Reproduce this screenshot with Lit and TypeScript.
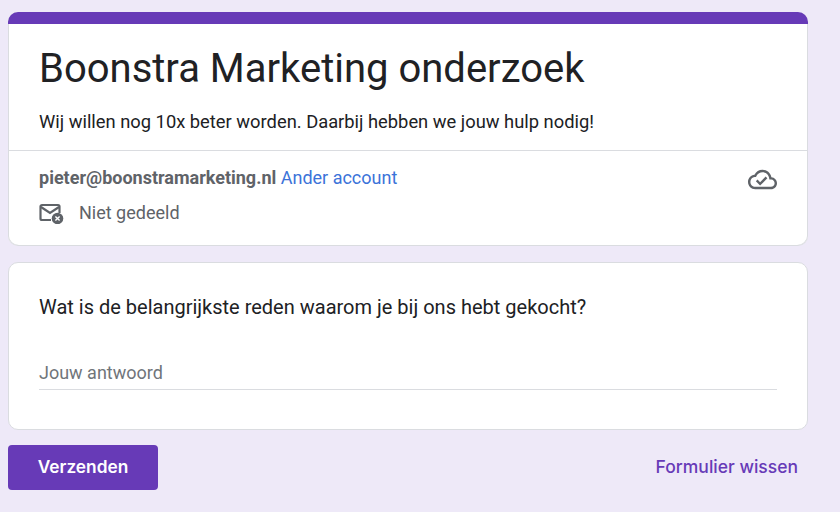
import { LitElement, html, css, svg } from 'lit';
import { customElement } from 'lit/decorators.js';

const cloudIcon = svg`<path fill="#5f6368" d="M19.35 10.04C18.67 6.59 15.64 4 12 4 9.11 4 6.6 5.64 5.35 8.04 2.34 8.36 0 10.91 0 14c0 3.31 2.69 6 6 6h13c2.76 0 5-2.24 5-5 0-2.64-2.05-4.78-4.65-4.96zM19 18H6c-2.21 0-4-1.79-4-4 0-2.05 1.53-3.76 3.56-3.97l1.07-.11.5-.95C8.08 7.14 9.94 6 12 6c2.62 0 4.88 1.86 5.39 4.43l.3 1.5 1.53.11c1.56.1 2.78 1.41 2.78 2.96 0 1.65-1.35 3-3 3zm-9-3.82l-2.09-2.09L6.5 13.5 10 17l6.01-6.01-1.41-1.41z"/>`;

const mailIcon = svg`<path d="M20.5 11 V4.5 a1.5 1.5 0 0 0 -1.5 -1.5 H3 A1.5 1.5 0 0 0 1.5 4.5 V16.5 a1.5 1.5 0 0 0 1.5 1.5 H12" fill="none" stroke="#5f6368" stroke-width="2.2"/>
  <path d="M2 5 L11 11 L20 5" fill="none" stroke="#5f6368" stroke-width="2.2"/>
  <circle cx="18.5" cy="16.5" r="5.8" fill="#5f6368"/>
  <path d="M16.4 14.4 L20.6 18.6 M20.6 14.4 L16.4 18.6" stroke="#fff" stroke-width="1.4"/>`;

@customElement('app-root')
export class AppRoot extends LitElement {
  static styles = css`
    :host {
      display: block;
      width: 840px;
      height: 512px;
      overflow: hidden;
      background: #eee9f8;
      font-family: Roboto, sans-serif;
      color: #202124;
    }
    .page {
      width: 800px;
      margin-left: 8px;
      padding-top: 12px;
      display: flex;
      flex-direction: column;
      gap: 16px;
    }
    .card {
      background: #fff;
      border: 1px solid #dadce0;
      border-radius: 10px;
      box-sizing: border-box;
    }
    .header {
      height: 234px;
      border: 0;
      border-bottom: 1px solid #dadce0;
      overflow: hidden;
      display: flex;
      flex-direction: column;
      box-shadow: inset 1px 0 0 #dadce0, inset -1px 0 0 #dadce0;
    }
    .band {
      height: 12px;
      flex: none;
      background: #673ab7;
    }
    .intro {
      height: 127px;
      flex: none;
      box-sizing: border-box;
      padding: 0 31px;
      border-bottom: 1px solid #dadce0;
    }
    h1 {
      margin: 0;
      padding-top: 21px;
      font-size: 40px;
      line-height: 48px;
      font-weight: 400;
    }
    .desc {
      margin: 17px 0 0;
      font-size: 18.33px;
      line-height: 24px;
    }
    .account {
      display: flex;
      justify-content: space-between;
      padding: 15px 31px 0;
    }
    .who {
      font-size: 18px;
      line-height: 24px;
    }
    .who b {
      font-weight: 700;
      color: #5f6368;
    }
    .who span {
      color: #3b73d9;
    }
    .cloud {
      display: block;
      width: 29px;
      height: 29px;
      margin-top: -1px;
    }
    .shared {
      display: flex;
      align-items: center;
      gap: 15px;
      padding: 7px 31px 0;
      font-size: 18px;
      line-height: 24px;
      color: #5f6368;
    }
    .shared svg {
      display: block;
      width: 25px;
      height: 22px;
    }
    .question {
      height: 168px;
      padding: 30px 30px 0;
    }
    .label {
      font-size: 20px;
      line-height: 28px;
    }
    .answer {
      margin-top: 37px;
      height: 31px;
      font-size: 18px;
      line-height: 30px;
      color: #70757a;
      border-bottom: 1px solid #dadce0;
    }
    .actions {
      display: flex;
      justify-content: space-between;
      align-items: center;
      margin-top: -1px;
    }
    .send {
      width: 150px;
      height: 45px;
      border: 0;
      padding: 0 0 2px;
      border-radius: 4px;
      background: #673ab7;
      color: #fff;
      font-family: Inter, sans-serif;
      font-size: 17.3px;
      font-weight: 600;
    }
    .clear {
      border: 0;
      background: none;
      padding: 0 10px 2px 0;
      color: #673ab7;
      font-family: Inter, sans-serif;
      font-size: 17.5px;
      font-weight: 500;
    }
  `;

  render() {
    return html`
      <div class="page">
        <section class="card header">
          <div class="band"></div>
          <div class="intro">
            <h1>Boonstra Marketing onderzoek</h1>
            <p class="desc">Wij willen nog 10x beter worden. Daarbij hebben we jouw hulp nodig!</p>
          </div>
          <div class="account">
            <div class="who"><b>pieter@boonstramarketing.nl</b> <span>Ander account</span></div>
            <svg class="cloud" viewBox="0 0 24 24">${cloudIcon}</svg>
          </div>
          <div class="shared">
            <svg viewBox="0 0 25 22">${mailIcon}</svg>
            Niet gedeeld
          </div>
        </section>
        <section class="card question">
          <div class="label">Wat is de belangrijkste reden waarom je bij ons hebt gekocht?</div>
          <div class="answer">Jouw antwoord</div>
        </section>
        <div class="actions">
          <button class="send">Verzenden</button>
          <button class="clear">Formulier wissen</button>
        </div>
      </div>
    `;
  }
}
